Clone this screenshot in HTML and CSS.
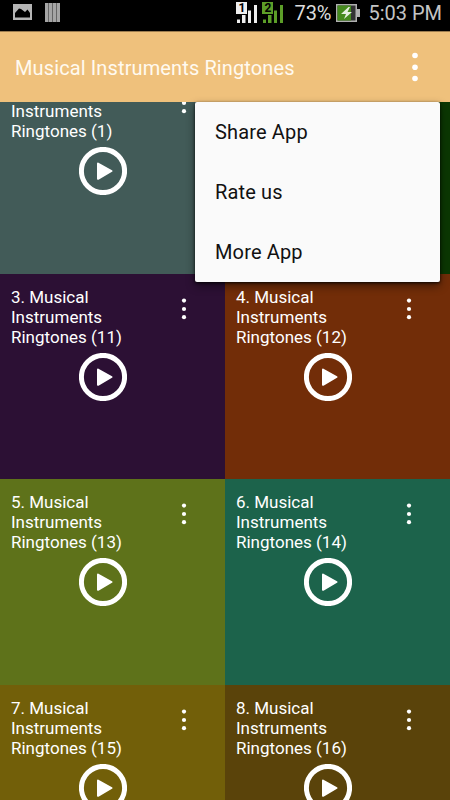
FILE: index.html
```
<!DOCTYPE html>
<html lang="en">
<head>
    <meta charset="UTF-8">
    <meta name="viewport" content="width=device-width, initial-scale=1.0">
    <title>Musical Instruments Ringtones</title>
    <link rel="stylesheet" href="styles.css">
</head>
<body>
    <svg class="symbols" width="0" height="0">
        <symbol id="play" viewBox="0 0 48 48">
            <circle cx="24" cy="24" r="21.6" fill="none" stroke="#fff" stroke-width="5"/>
            <path d="M19 16.5L32.5 24L19 31.8Z" fill="#fff" stroke="#fff" stroke-width="2" stroke-linejoin="round"/>
        </symbol>
        <symbol id="dots" viewBox="0 0 6 22">
            <circle cx="3" cy="2.6" r="2.1" fill="#fff"/>
            <circle cx="3" cy="11" r="2.1" fill="#fff"/>
            <circle cx="3" cy="19.2" r="2.1" fill="#fff"/>
        </symbol>
    </svg>
    <div class="phone">
        <div class="status-bar">
            <svg class="status-left" width="60" height="31" viewBox="0 0 60 31">
                <path fill="#b5b5b5" fill-rule="evenodd" d="M13 4H32V20H13ZM15 17.500H30V13L27.500 9.500L25 12L21 9L19 8.500L15 13Z"/>
                <path fill="#a5a5a5" d="M45 3H60V22H45Z"/>
                <path stroke="#656565" stroke-width="1" d="M48.500 3V22M52.500 3V22M56.500 3V22"/>
            </svg>
            <div class="status-right">
                <div class="signal">
                    <span class="sim">1</span>
                    <svg width="23" height="24" viewBox="0 0 23 24">
                        <path fill="#eee" d="M1 19.500H4V23H1ZM6 15H9.500V23H6ZM12 10.500H15V23H12ZM18 5H21V23H18Z"/>
                    </svg>
                </div>
                <div class="signal signal-green">
                    <span class="sim">2</span>
                    <svg width="23" height="24" viewBox="0 0 23 24">
                        <path fill="#5c9e28" d="M1 19.500H4V23H1ZM6 15H9.500V23H6ZM12 10.500H15V23H12ZM18 5H21V23H18Z"/>
                    </svg>
                </div>
                <span class="percent">73%</span>
                <svg class="battery" width="24" height="18" viewBox="0 0 24 18">
                    <path fill="#b0b0b0" d="M0 0H21V5H24V13H21V18H0Z"/>
                    <path fill="#333" d="M1.500 1.500H19.500V16.500H1.500Z"/>
                    <path fill="#458a1d" d="M1.500 1.500H15V16.500H1.500Z"/>
                    <path fill="#e5efdf" d="M12.500 3L5 10H10L8 15L16 8H11.500L14 3Z"/>
                </svg>
                <span class="clock">5:03 PM</span>
            </div>
        </div>
        <div class="app-bar">
            <h1>Musical Instruments Ringtones</h1>
            <svg class="overflow" width="8" height="30" viewBox="0 0 8 30">
                <circle cx="4" cy="3.500" r="2.800" fill="#fff"/>
                <circle cx="4" cy="15.200" r="2.800" fill="#fff"/>
                <circle cx="4" cy="26.500" r="2.800" fill="#fff"/>
            </svg>
        </div>
        <div class="list">
            <div class="grid">
                <div class="card slate">
                    <p>1. Musical Instruments Ringtones (1)</p>
                    <svg class="dots"><use href="#dots"/></svg>
                    <svg class="play"><use href="#play"/></svg>
                </div>
                <div class="card green"></div>
                <div class="card purple">
                    <p>3. Musical Instruments Ringtones (11)</p>
                    <svg class="dots"><use href="#dots"/></svg>
                    <svg class="play"><use href="#play"/></svg>
                </div>
                <div class="card rust">
                    <p>4. Musical Instruments Ringtones (12)</p>
                    <svg class="dots"><use href="#dots"/></svg>
                    <svg class="play"><use href="#play"/></svg>
                </div>
                <div class="card olive">
                    <p>5. Musical Instruments Ringtones (13)</p>
                    <svg class="dots"><use href="#dots"/></svg>
                    <svg class="play"><use href="#play"/></svg>
                </div>
                <div class="card teal">
                    <p>6. Musical Instruments Ringtones (14)</p>
                    <svg class="dots"><use href="#dots"/></svg>
                    <svg class="play"><use href="#play"/></svg>
                </div>
                <div class="card mustard">
                    <p>7. Musical Instruments Ringtones (15)</p>
                    <svg class="dots"><use href="#dots"/></svg>
                    <svg class="play"><use href="#play"/></svg>
                </div>
                <div class="card brown">
                    <p>8. Musical Instruments Ringtones (16)</p>
                    <svg class="dots"><use href="#dots"/></svg>
                    <svg class="play"><use href="#play"/></svg>
                </div>
            </div>
        </div>
        <div class="menu">
            <div class="menu-item">Share App</div>
            <div class="menu-item">Rate us</div>
            <div class="menu-item">More App</div>
        </div>
    </div>
</body>
</html>
```

FILE: styles.css
```
* {
    box-sizing: border-box;
}
body {
    margin: 0;
    background: #000;
    font-family: Roboto, sans-serif;
}
.symbols {
    position: absolute;
}
.phone {
    position: relative;
    display: flex;
    flex-direction: column;
    width: 450px;
    height: 800px;
    overflow: hidden;
}
.status-bar {
    display: flex;
    justify-content: space-between;
    height: 31px;
    background: #000;
}
.status-right {
    display: flex;
    padding-right: 8px;
    color: #c4c4c4;
    font-size: 20px;
    line-height: 26px;
}
.signal {
    position: relative;
    width: 26px;
}
.signal svg {
    display: block;
}
.sim {
    position: absolute;
    left: 0;
    top: 2px;
    width: 11px;
    height: 12px;
    background: #eee;
    color: #000;
    font-size: 12px;
    font-weight: bold;
    line-height: 12px;
    text-align: center;
}
.signal-green .sim {
    background: #5c9e28;
}
.percent {
    width: 48px;
    padding-left: 6px;
    color: #ddd;
    white-space: nowrap;
}
.battery {
    margin: 4px 8px 0 0;
}
.clock {
    white-space: nowrap;
}
.app-bar {
    display: flex;
    align-items: center;
    justify-content: space-between;
    height: 71px;
    padding: 0 31px 0 15px;
    background: #efc17c;
    border-top: 1px solid #9c7d50;
}
.app-bar h1 {
    margin: 0;
    padding-top: 1px;
    color: #fffaf0;
    font-size: 20px;
    font-weight: 400;
    letter-spacing: 0.12px;
}
.list {
    flex: 1;
    min-height: 0;
    overflow: hidden;
}
.grid {
    display: grid;
    grid-template-columns: 225px 225px;
    grid-auto-rows: 205.6px;
    margin-top: -34px;
}
.card {
    display: grid;
    grid-template-columns: 150px 30px;
    grid-template-rows: 66px 48px;
    justify-content: start;
    padding: 13px 0 0 11px;
}
.card p {
    margin: 0;
    color: #fff;
    font-size: 17px;
    line-height: 20px;
}
.dots {
    width: 6px;
    height: 22px;
    margin: 11px 0 0 20px;
}
.play {
    width: 48px;
    height: 48px;
    margin-left: 68px;
}
.slate { background: #425b58; }
.green { background: #0b3703; }
.purple { background: #2c1034; }
.rust { background: #722d08; }
.olive { background: #5e721a; }
.teal { background: #1c634b; }
.mustard { background: #725f09; }
.brown { background: #5a430a; }

/* overflow menu, over the list */
.menu {
    position: absolute;
    top: 102px;
    left: 195px;
    width: 245px;
    height: 180px;
    background: #fafafa;
    border-radius: 2px;
    box-shadow: 0 1px 3px rgba(0,0,0,0.8), 0 4px 10px rgba(0,0,0,0.45);
}
.menu-item {
    height: 60px;
    padding-left: 20px;
    color: #111;
    font-size: 20px;
    line-height: 61px;
    letter-spacing: 0.15px;
}
```
